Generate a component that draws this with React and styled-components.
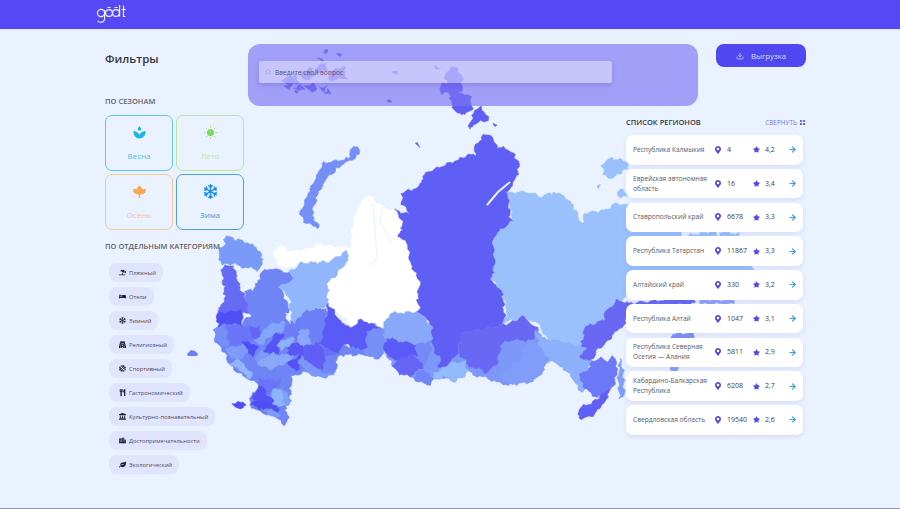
import styled, { createGlobalStyle } from "styled-components";
import { ArrowRight, Download, Search } from "lucide-react";
import {
  FaBasketballBall,
  FaBed,
  FaCity,
  FaGopuram,
  FaLandmark,
  FaLeaf,
  FaMapMarkerAlt,
  FaRegSnowflake,
  FaStar,
  FaUmbrellaBeach,
  FaUtensils,
} from "react-icons/fa";

const GlobalStyle = createGlobalStyle`
  html, body {
    margin: 0;
    padding: 0;
    background: #eaf2ff;
    font-family: "Open Sans", "Liberation Sans", sans-serif;
  }
`;

const Page = styled.div`
  position: relative;
  width: 900px;
  height: 509px;
  overflow: hidden;
  box-sizing: border-box;
  background: #eaf2ff;
  border-bottom: 1px solid #8d97a8;
`;

const Header = styled.header`
  position: relative;
  z-index: 2;
  display: flex;
  align-items: flex-start;
  height: 29px;
  padding-left: 96px;
  background: #5549f6;
  border-bottom: 1px solid #dfe3fb;
`;

const Content = styled.div`
  position: relative;
  z-index: 1;
  display: flex;
  padding: 14px 94px 0 105px;
`;

const Sidebar = styled.aside`
  width: 143px;
  flex-shrink: 0;
`;

const Title = styled.h1`
  margin: 0;
  padding-top: 6px;
  height: 28px;
  font-size: 11.5px;
  line-height: 18px;
  font-weight: 600;
  color: #33363f;
`;

const SectionLabel = styled.h2`
  margin: ${(p) => p.$top}px 0 ${(p) => p.$bottom}px;
  font-size: 7.5px;
  line-height: 11px;
  font-weight: 600;
  white-space: nowrap;
  color: #5c5f6a;
`;

const SeasonGrid = styled.div`
  display: grid;
  grid-template-columns: 68px 68px;
  grid-auto-rows: 56px;
  gap: 3px;
`;

const SeasonCard = styled.button`
  display: flex;
  flex-direction: column;
  align-items: center;
  padding: 9px 0 0;
  border: 1px solid ${(p) => p.$border};
  border-radius: 7px;
  background: transparent;
  font-family: inherit;
  font-size: 8px;
  line-height: 11px;
  color: ${(p) => p.$text};

  svg {
    display: block;
    width: 15px;
    height: 15px;
    margin-bottom: 10px;
  }
`;

const Pills = styled.div`
  display: flex;
  flex-direction: column;
  align-items: flex-start;
  gap: 5px;
  padding-left: 4px;
`;

const Pill = styled.div`
  display: flex;
  align-items: center;
  gap: 3px;
  height: 19px;
  padding: 0 7px 0 10px;
  border-radius: 8px;
  background: #e1e4fd;
  font-size: 5.8px;
  color: #4a4c5c;
  white-space: nowrap;

  svg {
    width: 7px;
    height: 7px;
    color: #1d1f33;
    flex-shrink: 0;
  }
`;

const Main = styled.main`
  flex: 1;
  display: flex;
  flex-direction: column;
`;

const TopRow = styled.div`
  display: flex;
  justify-content: space-between;
  align-items: flex-start;
`;

const AskPanel = styled.div`
  flex: 0 0 450px;
  height: 62px;
  box-sizing: border-box;
  padding: 17px 86px 0 11px;
  border-radius: 12px;
  background: rgba(124, 116, 245, 0.66);
`;

const AskField = styled.div`
  display: flex;
  align-items: center;
  gap: 4px;
  height: 22px;
  padding-left: 6px;
  border-radius: 2px;
  background: rgba(255, 255, 255, 0.4);
  box-shadow: 0 2px 5px rgba(70, 60, 180, 0.25);
  font-size: 6.6px;
  color: #55527f;

  svg {
    width: 6px;
    height: 6px;
    color: #9a97d8;
  }
`;

const ExportButton = styled.button`
  display: flex;
  align-items: center;
  justify-content: center;
  gap: 7px;
  flex: 0 0 90px;
  height: 23px;
  border: 0;
  border-radius: 8px;
  background: #5147f1;
  color: #dcdaff;
  font-family: inherit;
  font-size: 7.8px;
  font-weight: 500;

  svg {
    width: 8px;
    height: 8px;
  }
`;

const RegionPanel = styled.section`
  align-self: flex-end;
  width: 180px;
  margin-top: 5px;
`;

const RegionHead = styled.div`
  display: flex;
  align-items: center;
  justify-content: space-between;
  height: 22px;
  padding-right: 1px;
  margin-bottom: 2px;
`;

const RegionTitle = styled.h2`
  margin: 0;
  font-size: 7.5px;
  font-weight: 600;
  color: #33363f;
`;

const Collapse = styled.span`
  display: flex;
  align-items: center;
  gap: 3px;
  font-size: 6.4px;
  color: #7a77e2;
`;

const CollapseIcon = styled.svg`
  width: 5px;
  height: 5px;
  fill: #6e6ae4;
`;

const RegionList = styled.ul`
  list-style: none;
  display: flex;
  flex-direction: column;
  gap: 4.25px;
  margin: 0;
  padding: 0;
  width: 177px;
`;

const RegionRow = styled.li`
  display: grid;
  grid-template-columns: 80px 10px 28px 10px 25px 12px;
  align-items: center;
  height: 29.5px;
  padding-left: 7px;
  border-radius: 7px;
  background: #fff;
  box-shadow: 0 2px 5px rgba(90, 100, 210, 0.14);
  font-size: 6.6px;
  line-height: 10px;
  color: #565966;
`;

const RegionName = styled.span`
  padding-right: 2px;
`;

const Metric = styled.span`
  padding-left: 4px;
  font-size: 7px;
  font-weight: 500;
  color: #3c3f4a;
`;

const Pin = styled(FaMapMarkerAlt)`
  width: 6px;
  height: 8px;
  justify-self: center;
  color: #5b46d8;
`;

const StarIcon = styled(FaStar)`
  width: 7px;
  height: 7px;
  justify-self: center;
  color: #5147e6;
`;

const GoIcon = styled(ArrowRight)`
  width: 9px;
  height: 9px;
  justify-self: center;
  color: #3f9ae8;
`;

const MapLayer = styled.svg`
  position: absolute;
  top: 0;
  left: 0;
  z-index: 0;
  filter: blur(0.35px);
`;

function Logo() {
  return (
    <svg width="34" height="24" viewBox="0 0 34 24" fill="none" stroke="#f4f3ff" strokeWidth="1.15">
      <circle cx="5" cy="13" r="3.6" />
      <path d="M8.600 10v8c0 3-2 4.300-3.800 4.300-1.500 0-2.700-.6-3.300-1.500" />
      <circle cx="13" cy="13" r="3.400" />
      <circle cx="20" cy="13" r="3.400" />
      <path d="M11.500 7.500h3M18.500 7.500h3M23.600 5v11.500M27.500 5.500v11h1.800M25.800 9.500h4" />
    </svg>
  );
}

const SpringIcon = () => (
  <svg viewBox="0 0 16 16" fill="#1fb6de">
    <path d="M8 1c1 1.400 1.800 2.300 1.800 3.300a1.800 1.800 0 0 1-3.600 0C6.200 3.300 7 2.400 8 1z" />
    <path d="M1.500 6.500c2.500 0 5.300 1.500 6.500 4 1.200-2.500 4-4 6.500-4 .3 4.300-2.500 8-6.500 8s-6.800-3.700-6.500-8z" />
  </svg>
);

const SummerIcon = () => (
  <svg viewBox="0 0 16 16" fill="#7fd95c" stroke="#9fdf86" strokeWidth="1">
    <circle cx="8" cy="8" r="3.800" stroke="none" />
    <path d="M8 .8v2M8 13.200v2M.8 8h2M13.200 8h2M2.900 2.900l1.400 1.400M11.700 11.700l1.400 1.400M13.100 2.900l-1.400 1.400M4.300 11.700l-1.400 1.400" />
  </svg>
);

const AutumnIcon = () => (
  <svg viewBox="0 0 16 16" fill="#f8a850">
    <path d="M8 1.500l2.200 2.300 .8 1.700 3.800-.5-.6 2 1 1.200-3.400 2.500-3 .4V15H7.200v-3.900l-3-.4L.8 8.200l1-1.200-.6-2 3.800.5.800-1.700z" />
  </svg>
);

const WinterIcon = () => <FaRegSnowflake color="#1d8bf0" />;

const seasons = [
  { name: "Весна", border: "#5ec8e0", text: "#4fbfdc", Icon: SpringIcon },
  { name: "Лето", border: "#b5e6a4", text: "#b9e8a8", Icon: SummerIcon },
  { name: "Осень", border: "#f3cb9d", text: "#f3c690", Icon: AutumnIcon },
  { name: "Зима", border: "#4e9fdc", text: "#4698da", Icon: WinterIcon },
];

const categories = [
  { name: "Пляжный", Icon: FaUmbrellaBeach },
  { name: "Отели", Icon: FaBed },
  { name: "Зимний", Icon: FaRegSnowflake },
  { name: "Религиозный", Icon: FaGopuram },
  { name: "Спортивный", Icon: FaBasketballBall },
  { name: "Гастрономический", Icon: FaUtensils },
  { name: "Культурно-познавательный", Icon: FaLandmark },
  { name: "Достопримечательности", Icon: FaCity },
  { name: "Экологический", Icon: FaLeaf },
];

const regions = [
  ["Республика Калмыкия", "4", "4,2"],
  ["Еврейская автономная область", "16", "3,4"],
  ["Ставропольский край", "6678", "3,3"],
  ["Республика Татарстан", "11867", "3,3"],
  ["Алтайский край", "330", "3,2"],
  ["Республика Алтай", "1047", "3,1"],
  ["Республика Северная Осетия — Алания", "5811", "2,9"],
  ["Кабардино-Балкарская Республика", "6208", "2,7"],
  ["Свердловская область", "19540", "2,6"],
];

const BG = "#eaf2ff";

// page coordinates
const northShapes = [
  ["#fff", "367,195 372,198 376,204 384,206 392,212 395,208 402,220 402,230 397,235 408,245 410,263 415,272 420,283 417,300 420,310 417,314 392,315 383,327 363,320 353,327 340,313 327,307 328,282 350,255 345,250 336,258 323,262 300,263 286,268 277,263 273,250 281,246 292,252 307,249 320,244 333,247 352,247 352,228 358,208"],
  ["#5f5ff6", "483,135 489,136 495,140 497,147 505,148 513,152 519,163 517,177 510,188 508,197 510,217 515,222 503,237 493,240 495,263 492,283 502,290 505,325 487,328 462,333 457,353 450,363 443,370 438,367 432,340 430,320 417,313 420,310 417,300 420,283 410,263 408,245 397,235 402,230 402,220 395,208 402,214 410,213 402,205 402,193 412,190 420,187 421,180 427,173 440,167 457,160 467,155 475,155 475,147"],
  ["#92b6fb", "290,272 300,263 330,262 345,252 350,255 343,267 328,283 327,307 307,310 293,323 290,310 290,300 280,287 293,280"],
  ["#9ac1fc", "508,193 523,192 532,193 540,197 555,192 570,200 577,213 582,225 585,213 607,210 617,203 626,205 682,215 682,236 710,232 753,262 753,271 700,290 640,290 617,302 605,313 603,320 585,327 583,343 587,350 570,347 548,340 537,323 523,317 503,323 507,310 503,293 492,280 495,260 493,238 513,220"],
  ["#9ac1fc", "710,232 716,232 716,238 710,238"],
  ["#9ac1fc", "720,232 740,234 740,238 720,238"],
  ["#9ac1fc", "602,165 610,158 622,160 630,168 622,172 612,178 604,175"],
  ["#9ac1fc", "617,190 623,190 628,196 620,197"],
  ["#9ac1fc", "597,186 599,184 600,188"],
  ["#748ff8", "361,148 358,146 353,148 348,158 340,160 323,163 313,183 307,197 300,213 305,223 320,228 312,215 317,197 327,177 340,167 358,155"],
  ["#5f5ff6", "453,65 458,70 463,80 461,91 452,97 447,92 441,94 441,84 447,83 445,75"],
  ["#5f5ff6", "450,96 463,92 470,97 472,108 465,115 456,112 451,104"],
  ["#5f5ff6", "480,105 490,120 477,123 469,130 473,115"],
  ["#5f5ff6", "492,124 497,126 496,128"],
  ["#5f5ff6", "416,144 419,142 418,148"],
  // Franz Josef Land
  ["#5f5ff6", "322,51 327,50 326,54"],
  ["#5f5ff6", "338,54 342,55 339,57"],
  ["#5f5ff6", "318,59 324,58 322,62"],
  ["#5f5ff6", "315,68 325,62 328,70 318,73"],
  ["#5f5ff6", "300,72 312,68 315,76 304,80"],
  ["#5f5ff6", "328,72 344,66 346,78 330,80"],
  ["#5f5ff6", "283,80 296,74 298,82 288,85"],
  ["#5f5ff6", "284,85 292,84 290,90"],
  ["#5f5ff6", "295,88 301,84 304,90"],
  ["#5f5ff6", "305,86 314,84 316,91 308,91"],
  ["#5f5ff6", "318,88 325,86 326,92"],
  ["#5f5ff6", "326,93 329,90 330,94"],
  ["#5f5ff6", "294,92 297,90 297,94"],
  ["#5f5ff6", "386,100 391,100 388,103"],
  ["#5f5ff6", "393,71 398,72 395,74"],
  ["#5f5ff6", "435,67 441,67 438,70"],
];

// crop 7 coordinates: page = 210 + x / 3, 230 + y / 3
const westShapes = [
  ["#6f85f6", "15,295 50,280 95,285 125,250 220,250 240,280 290,240 350,235 345,320 375,345 480,355 480,375 385,375 375,430 345,440 320,440 290,425 245,440 240,510 245,515 225,525 235,570 225,585 205,565 150,545 120,530 125,490 150,470 130,450 100,440 55,400 45,370 15,335"],
  ["#7a9af8", "30,55 45,40 40,28 65,15 70,28 100,32 120,40 145,62 160,90 145,120 100,110 70,100 35,105 25,75"],
  ["#666bf5", "36,110 70,105 78,130 90,170 110,210 120,240 122,250 70,252 20,252 45,200 38,150"],
  ["#6f85f6", "150,130 180,115 240,130 250,155 210,170 240,240 220,252 118,252 108,205 102,185 125,180 145,160"],
  ["#4f4ff6", "20,250 95,240 97,285 50,280 25,295"],
  ["#7590f8", "15,292 42,285 55,350 32,348 15,325"],
  ["#6b73f6", "50,285 95,290 125,290 128,335 95,340 60,350"],
  ["#6565f5", "122,292 150,290 150,320 135,330 125,325"],
  ["#84a3fa", "150,310 180,285 225,275 215,305 180,320 150,345 138,335"],
  ["#6e7df6", "225,300 245,270 270,265 275,295 260,325 225,325"],
  ["#4f4ff6", "95,345 115,330 130,345 148,355 130,375 105,365"],
  ["#5555f5", "165,360 195,315 225,310 205,345 205,370 180,372"],
  ["#6d7ff6", "275,250 345,235 345,320 330,345 300,320 295,290 270,290"],
  ["#8aa5fa", "265,305 295,295 300,345 265,348"],
  ["#5757f5", "230,345 260,340 285,350 280,375 240,375"],
  ["#8fb0fa", "205,345 225,325 255,325 250,340 225,350 212,362"],
  ["#5f5ff5", "285,350 320,340 345,365 340,415 320,415 280,385"],
  ["#6b6ff6", "340,345 375,345 385,372 345,375"],
  ["#5353f5", "235,395 270,375 275,395 255,425 235,405"],
  ["#8aa8fa", "145,395 170,380 180,370 205,375 250,375 235,395 200,410 180,420 150,415"],
  ["#7d9af8", "130,385 160,360 175,375 145,395"],
  ["#7e9bf8", "50,355 100,345 115,370 85,390 60,380"],
  ["#6f85f6", "85,395 120,385 140,395 130,430 100,425"],
  ["#93b5fb", "55,400 85,390 100,400 130,435 120,445 95,430 80,410"],
  ["#7d97f8", "265,400 280,380 320,420 345,430 375,435 350,440 320,440 290,425"],
  ["#6f85f6", "130,400 180,420 235,415 255,425 215,450 170,450 140,435"],
  ["#6b74f6", "145,445 170,450 215,450 190,480 170,490 150,470"],
  ["#8fb4fb", "190,480 215,475 225,525 190,535 185,505"],
  ["#7f9ff9", "215,470 235,500 240,515 225,525"],
  ["#5353f5", "130,490 150,470 170,490 190,510 185,520 150,510 130,510"],
  ["#4f4ff6", "120,520 150,510 200,525 205,545 170,545 140,535"],
  ["#7e9bf8", "155,535 205,545 215,560 185,560"],
  ["#6e85f6", "205,560 225,555 235,570 225,585"],
  ["#4f4ff6", "70,520 85,515 105,525 95,535 75,530"],
];

// crop 6 coordinates: page = 180 + x / 3, 230 + y / 3
const siberiaBase = [
  ["#7d98f8", "540,280 1072,295 1085,325 1170,340 1215,350 1240,395 1205,430 1225,470 1205,485 1165,430 1130,395 1100,395 1090,420 1060,455 1030,450 990,465 960,460 920,445 900,440 860,425 830,455 810,450 770,440 760,450 740,465 720,450 690,440 660,430 640,410 610,365 590,390 565,375 555,360"],
];

const eastShapes = [
  ["#5a5af6", "445,225 480,270 510,295 545,270 605,295 565,300 560,350 540,360 500,340 470,370 420,340 430,310"],
  ["#788ff8", "560,305 605,295 620,320 610,365 590,390 565,375 560,350"],
  ["#8aa8fa", "630,250 710,245 755,285 755,330 715,340 690,345 615,320 610,295"],
  ["#5a5af6", "620,325 705,345 712,375 650,390 610,365"],
  ["#6565f5", "650,390 690,375 720,385 730,410 690,440 660,430 640,410"],
  ["#7085f7", "700,440 730,415 760,450 740,465 705,450"],
  ["#7788f7", "710,345 750,335 755,390 730,410 720,385 712,375"],
  ["#7d98f8", "755,360 785,395 760,425 735,410"],
  ["#92bafc", "760,430 810,400 855,395 860,425 830,455 790,440 765,450"],
  ["#6868f5", "845,310 920,295 975,285 1030,260 1072,295 1060,330 1000,330 965,340 950,400 920,430 860,400 835,370"],
  ["#7f9df9", "960,435 1025,390 1040,335 1080,345 1105,385 1090,420 1060,455 990,465"],
  ["#8db0fb", "1062,295 1085,325 1170,340 1215,350 1240,395 1205,430 1225,470 1205,485 1165,430 1130,395 1100,395 1105,385 1080,345"],
];

// crop 9 coordinates: page = 490 + x / 3, 180 + y / 3
const farEastShapes = [
  ["#6868f5", "380,360 345,400 340,420 285,440 275,500 290,510 270,530 300,545 315,520 405,430 415,385 612,370 612,350 420,370"],
  ["#6d78f7", "270,585 300,560 305,545 335,535 350,545 370,530 382,560 372,620 345,645 310,650 285,625 275,605"],
  ["#5f5ff6", "270,680 300,670 345,640 360,625 345,670 300,710 265,715"],
  ["#7f9ff9", "390,530 400,570 402,640 390,660 385,600"],
  ["#8fa2f8", "627,360 730,360 730,372 627,372"],
  ["#7f8ff7", "546,460 610,460 610,478 546,478"],
  ["#7f9ff9", "540,560 565,560 565,572 540,572"],
];

// Roughens the hand-traced outlines: neighbours share the same field, so borders stay shut.
const warp = (x, y) => [
  x + 1.1 * Math.sin(y * 0.55 + x * 0.17) + 0.7 * Math.sin(y * 1.3 - x * 0.4 + 1),
  y + 1.1 * Math.sin(x * 0.5 - y * 0.2 + 2) + 0.7 * Math.sin(x * 1.2 + y * 0.35),
];

function roughen(points, ox, oy, scale) {
  const pts = points.split(" ").map((p) => {
    const [x, y] = p.split(",").map(Number);
    return [ox + x * scale, oy + y * scale];
  });
  const out = [];
  pts.forEach(([x, y], i) => {
    const [nx, ny] = pts[(i + 1) % pts.length];
    const steps = Math.max(1, Math.round(Math.hypot(nx - x, ny - y) / 2.5));
    for (let s = 0; s < steps; s++) {
      const [wx, wy] = warp(x + ((nx - x) * s) / steps, y + ((ny - y) * s) / steps);
      out.push(`${wx.toFixed(1)},${wy.toFixed(1)}`);
    }
  });
  return out.join(" ");
}

function Shapes({ items, x = 0, y = 0, scale = 1 }) {
  return (
    <g strokeLinejoin="round">
      {items.map(([fill, points], i) => (
        <polygon key={i} fill={fill} stroke={fill} strokeWidth={0.6} points={roughen(points, x, y, scale)} />
      ))}
    </g>
  );
}

function RussiaMap() {
  return (
    <MapLayer width="900" height="509" viewBox="0 0 900 509">
      <Shapes items={westShapes} x={210} y={230} scale={1 / 3} />
      <Shapes items={siberiaBase} x={180} y={230} scale={1 / 3} />
      <Shapes items={northShapes} />
      <Shapes items={eastShapes} x={180} y={230} scale={1 / 3} />
      <Shapes items={farEastShapes} x={490} y={180} scale={1 / 3} />
      <polygon fill="#6d7ff6" points="187,354 191,350 195,351 198,354 197,356 188,356" />
      <polyline fill="none" stroke={BG} strokeWidth="2" points="510,182 498,192 487,205" />
      <polyline fill="none" stroke={BG} strokeWidth="1.5" points="373,203 375,230 377,257 370,267" opacity="0.8" />
      <polyline fill="none" stroke={BG} strokeWidth="1.5" points="383,206 380,222 392,242" opacity="0.7" />
    </MapLayer>
  );
}

export default function App() {
  return (
    <Page>
      <GlobalStyle />
      <Header>
        <Logo />
      </Header>
      <RussiaMap />
      <Content>
        <Sidebar>
          <Title>Фильтры</Title>
          <SectionLabel $top={18} $bottom={8}>ПО СЕЗОНАМ</SectionLabel>
          <SeasonGrid>
            {seasons.map(({ name, border, text, Icon }) => (
              <SeasonCard key={name} $border={border} $text={text}>
                <Icon />
                {name}
              </SeasonCard>
            ))}
          </SeasonGrid>
          <SectionLabel $top={11} $bottom={11}>ПО ОТДЕЛЬНЫМ КАТЕГОРИЯМ</SectionLabel>
          <Pills>
            {categories.map(({ name, Icon }) => (
              <Pill key={name}>
                <Icon />
                {name}
              </Pill>
            ))}
          </Pills>
        </Sidebar>
        <Main>
          <TopRow>
            <AskPanel>
              <AskField>
                <Search />
                Введите свой вопрос
              </AskField>
            </AskPanel>
            <ExportButton>
              <Download />
              Выгрузка
            </ExportButton>
          </TopRow>
          <RegionPanel>
            <RegionHead>
              <RegionTitle>СПИСОК РЕГИОНОВ</RegionTitle>
              <Collapse>
                СВЕРНУТЬ
                <CollapseIcon viewBox="0 0 5 5">
                  <rect width="2" height="2" />
                  <rect x="3" width="2" height="2" />
                  <rect y="3" width="2" height="2" />
                  <rect x="3" y="3" width="2" height="2" />
                </CollapseIcon>
              </Collapse>
            </RegionHead>
            <RegionList>
              {regions.map(([name, count, rating]) => (
                <RegionRow key={name}>
                  <RegionName>{name}</RegionName>
                  <Pin />
                  <Metric>{count}</Metric>
                  <StarIcon />
                  <Metric>{rating}</Metric>
                  <GoIcon strokeWidth={3} />
                </RegionRow>
              ))}
            </RegionList>
          </RegionPanel>
        </Main>
      </Content>
    </Page>
  );
}
